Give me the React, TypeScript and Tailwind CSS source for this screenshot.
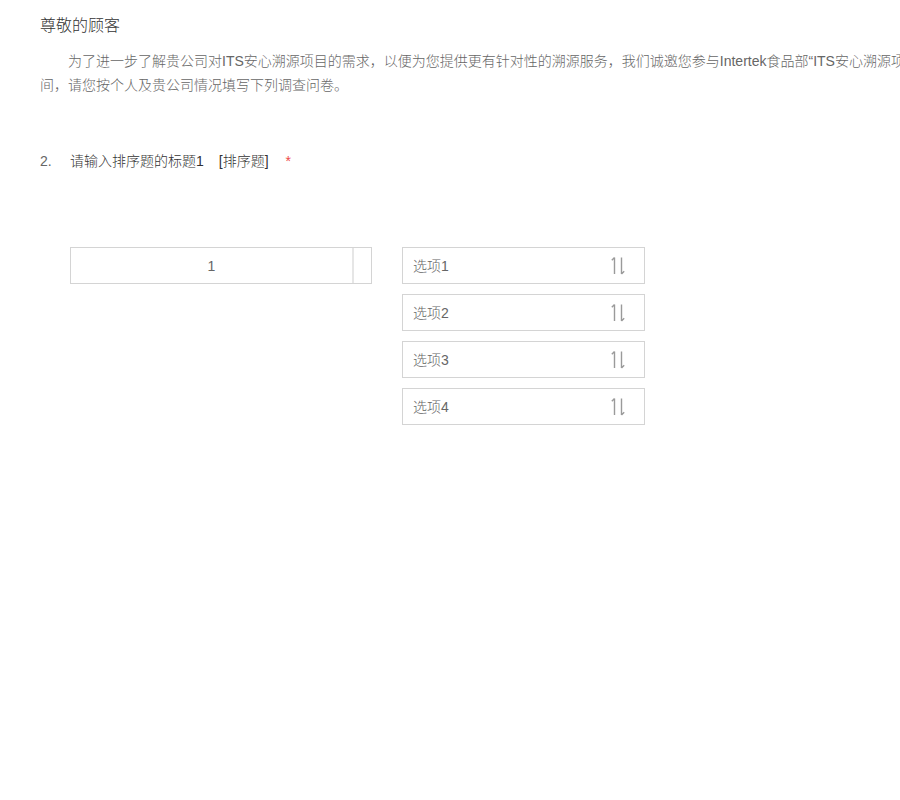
const options = ["选项1", "选项2", "选项3", "选项4"];

const SortIcon = () => (
  <svg width="14" height="19" viewBox="0 0 14 19" fill="none" stroke="#9a9a9a" strokeWidth="1.4">
    <path d="M3.5 1.5 V18 M3.5 1.5 L0.8 4.2" />
    <path d="M10.5 1.5 V18 M10.5 18 L13.2 15.3" />
  </svg>
);

const App = () => {
  return (
    <div className="w-full min-h-[800px] overflow-hidden bg-white px-[40px] pt-[14px] font-light font-['Liberation_Sans','Noto_Sans_CJK_SC',sans-serif]">
      <h1 className="text-[16px] leading-[24px] text-[#333]">尊敬的顾客</h1>

      <p className="mt-[11px] text-[14px] leading-[24px] text-[#666] whitespace-nowrap">
        <span className="pl-[28px]">
          为了进一步了解贵公司对ITS安心溯源项目的需求，以便为您提供更有针对性的溯源服务，我们诚邀您参与Intertek食品部“ITS安心溯源项目”客户需求调查，本次调查将占用您几分钟的时
        </span>
        <br />
        间，请您按个人及贵公司情况填写下列调查问卷。
      </p>

      <div className="mt-[54px] flex items-center text-[14px] leading-[20px]">
        <span className="w-[30px] text-[#666]">2.</span>
        <span className="text-[#333]">请输入排序题的标题1</span>
        <span className="ml-[15px] text-[#333]">[排序题]</span>
        <span className="ml-[17px] text-[#ee4a4a]">*</span>
      </div>

      <div className="mt-[76px] ml-[30px] flex items-start gap-[30px]">
        <div className="flex h-[37px] w-[302px] border border-[#d4d4d4]">
          <div className="flex w-[283px] items-center justify-center border-r-2 border-[#e6e6e6] pt-[2px] text-[14px] text-[#666]">
            1
          </div>
          <div className="flex-1" />
        </div>

        <div className="flex flex-col gap-[10px]">
          {options.map((opt) => (
            <div
              key={opt}
              className="flex h-[37px] w-[243px] items-center justify-between border border-[#d4d4d4] pl-[10px] pr-[19px]"
            >
              <span className="pt-[2px] text-[14px] text-[#666]">{opt}</span>
              <SortIcon />
            </div>
          ))}
        </div>
      </div>
    </div>
  );
};

export default App;
